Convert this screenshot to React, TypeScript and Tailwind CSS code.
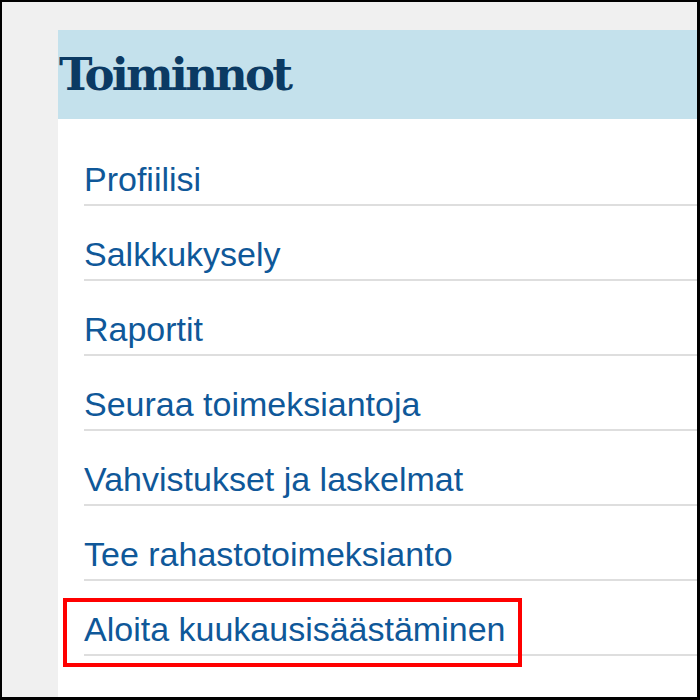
import React from "react";

const items = [
  "Profiilisi",
  "Salkkukysely",
  "Raportit",
  "Seuraa toimeksiantoja",
  "Vahvistukset ja laskelmat",
  "Tee rahastotoimeksianto",
  "Aloita kuukausisäästäminen",
];

export default function App() {
  return (
    <div className="w-[700px] h-[700px] overflow-hidden border-t-2 border-l-2 border-r-[3px] border-b-[3px] border-black bg-[#f0f0f0] pl-[56px] pt-[28px]">
      <div className="h-full bg-white">
        <div className="h-[89px] bg-[#c4e1ec] flex items-center pl-[1px]">
          <h1
            className="text-[45px] leading-none font-bold text-[#0b3a63] tracking-[-2.8px]"
            style={{ fontFamily: '"DejaVu Serif", "Liberation Serif", serif' }}
          >
            Toiminnot
          </h1>
        </div>
        <ul className="ml-[26px] pt-[12px]">
          {items.map((t, i) => (
            <li
              key={t}
              className="relative h-[75px] border-b-2 border-[#dedede] flex items-end pb-[6px]"
            >
              <span
                className="text-[34px] leading-[38px] text-[#0f5899]"
                style={{ fontFamily: '"Liberation Sans", Arial, sans-serif' }}
              >
                {t}
              </span>
              {i === items.length - 1 && (
                <div className="absolute left-[-21px] top-[17px] w-[459px] h-[69px] border-4 border-[#ff0000]" />
              )}
            </li>
          ))}
        </ul>
      </div>
    </div>
  );
}
